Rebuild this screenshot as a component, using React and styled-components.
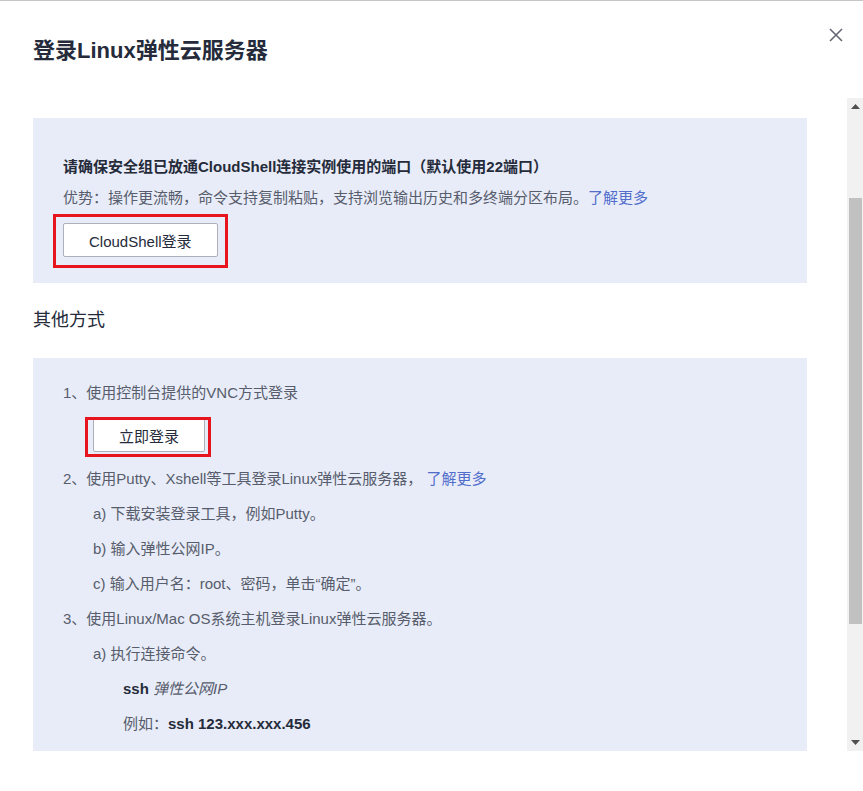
import React, { useLayoutEffect, useRef, useState } from "react";
import styled, { createGlobalStyle } from "styled-components";

const Global = createGlobalStyle`
  html, body { margin: 0; padding: 0; height: 100%; background: #fff; }
  body { font-family: "Liberation Sans", "Noto Sans CJK SC", sans-serif; color: #575d6c; }
  #root { height: 100%; }
  * { box-sizing: border-box; }
`;

const Dialog = styled.div`
  position: relative;
  height: 100vh;
  display: flex;
  flex-direction: column;
  border-top: 1px solid #c6c6c6;
  background: #fff;
`;

const Header = styled.header`
  flex: none;
  height: 97px;
  padding: 37px 0 0 33px;
`;

const Title = styled.h1`
  margin: 0;
  font-size: 22px;
  line-height: 26px;
  font-weight: 700;
  color: #252b3a;
`;

const CloseButton = styled.button`
  position: absolute;
  top: 26px;
  right: 19px;
  width: 16px;
  height: 16px;
  padding: 0;
  border: 0;
  background: none;
  display: flex;
  align-items: center;
  justify-content: center;
  cursor: pointer;
`;

const Body = styled.div`
  flex: 1;
  min-height: 0;
  display: flex;
`;

const Viewport = styled.div`
  flex: 1;
  min-width: 0;
  overflow-y: scroll;
  scrollbar-width: none;
  padding: 147px 40px 20px 33px;
  &::-webkit-scrollbar { display: none; }
`;

const ScrollBar = styled.div`
  flex: none;
  width: 16px;
  display: flex;
  flex-direction: column;
  background: #f1f1f1;
`;

const ScrollButton = styled.div`
  flex: none;
  height: 17px;
  display: flex;
  align-items: center;
  justify-content: center;
`;

const Track = styled.div`
  position: relative;
  flex: 1;
`;

const Thumb = styled.div`
  position: absolute;
  left: 2px;
  right: 1px;
  background: #c1c1c1;
`;

const Panel = styled.section`
  background: #e8ecf8;
  padding: ${(p) => p.$pt}px 30px ${(p) => p.$pb}px;
  display: flex;
  flex-direction: column;
  align-items: flex-start;
`;

const Line = styled.p`
  margin: ${(p) => p.$mt ?? 13}px 0 0 ${(p) => (p.$level || 0) * 30}px;
  font-size: 15px;
  line-height: 22px;
  white-space: nowrap;
  color: ${(p) => (p.$strong ? "#252b3a" : "#575d6c")};
  font-weight: ${(p) => (p.$strong ? 700 : 400)};
  &:first-child { margin-top: 0; }
`;

const Bold = styled.b`
  color: #252b3a;
  font-weight: 700;
`;

const Em = styled.i`
  font-style: italic;
  color: #575d6c;
`;

const Link = styled.a`
  color: #526ecc;
  text-decoration: none;
  cursor: pointer;
`;

const SectionTitle = styled.h2`
  margin: 26px 0 27px;
  font-size: 18px;
  line-height: 22px;
  font-weight: 400;
  color: #252b3a;
`;

const Marked = styled.div`
  position: relative;
  display: flex;
  margin: ${(p) => p.$mt}px 0 0 ${(p) => (p.$level || 0) * 30}px;
  &::after {
    content: "";
    position: absolute;
    top: ${(p) => p.$box[0]}px;
    right: ${(p) => p.$box[1]}px;
    bottom: ${(p) => p.$box[2]}px;
    left: ${(p) => p.$box[3]}px;
    border: 3px solid #e8141d;
    pointer-events: none;
  }
`;

const Button = styled.button`
  height: 34px;
  padding: 0 25px;
  background: #fff;
  border: 1px solid #adb0b8;
  border-radius: 2px;
  font-family: inherit;
  font-size: 15px;
  color: #252b3a;
  cursor: pointer;
`;

const Footer = styled.footer`
  flex: none;
  height: 40px;
`;

const Arrow = ({ up }) => (
  <svg width="9" height="5" viewBox="0 0 9 5">
    <polygon points={up ? "0,5 4.5,0 9,5" : "0,0 4.5,5 9,0"} fill="#505050" />
  </svg>
);

export default function App() {
  const viewRef = useRef(null);
  const trackRef = useRef(null);
  const [thumb, setThumb] = useState({ top: 0, height: 0 });

  useLayoutEffect(() => {
    const v = viewRef.current;
    const t = trackRef.current;
    if (!v || !t) return;
    const update = () => {
      const trackH = t.clientHeight;
      const ratio = v.clientHeight / v.scrollHeight;
      const h = Math.max(20, Math.round(trackH * ratio));
      const maxScroll = v.scrollHeight - v.clientHeight;
      const top = maxScroll > 0 ? Math.round(((trackH - h) * v.scrollTop) / maxScroll) : 0;
      setThumb({ top, height: h });
    };
    v.scrollTop = 127;
    update();
    v.addEventListener("scroll", update);
    return () => v.removeEventListener("scroll", update);
  }, []);

  return (
    <>
      <Global />
      <Dialog>
        <Header>
          <Title>登录Linux弹性云服务器</Title>
        </Header>
        <CloseButton aria-label="关闭">
          <svg width="14" height="14" viewBox="0 0 14 14">
            <path d="M1 1 L13 13 M13 1 L1 13" stroke="#5f6470" strokeWidth="1.5" fill="none" />
          </svg>
        </CloseButton>
        <Body>
          <Viewport ref={viewRef}>
            <Panel $pt={38} $pb={26}>
              <Line $strong>请确保安全组已放通CloudShell连接实例使用的端口（默认使用22端口）</Line>
              <Line $mt={9}>
                优势：操作更流畅，命令支持复制粘贴，支持浏览输出历史和多终端分区布局。<Link>了解更多</Link>
              </Line>
              <Marked $mt={14} $box={[-9, -10, -11, -10]}>
                <Button>CloudShell登录</Button>
              </Marked>
            </Panel>

            <SectionTitle>其他方式</SectionTitle>

            <Panel $pt={24} $pb={165}>
              <Line>1、使用控制台提供的VNC方式登录</Line>
              <Marked $mt={14} $level={1} $box={[-1, -6, -5, -8]}>
                <Button>立即登录</Button>
              </Marked>
              <Line $mt={16}>
                2、使用Putty、Xshell等工具登录Linux弹性云服务器， <Link>了解更多</Link>
              </Line>
              <Line $level={1}>a) 下载安装登录工具，例如Putty。</Line>
              <Line $level={1}>b) 输入弹性公网IP。</Line>
              <Line $level={1}>c) 输入用户名：root、密码，单击“确定”。</Line>
              <Line>3、使用Linux/Mac OS系统主机登录Linux弹性云服务器。</Line>
              <Line $level={1}>a) 执行连接命令。</Line>
              <Line $level={2}>
                <Bold>ssh</Bold> <Em>弹性公网IP</Em>
              </Line>
              <Line $level={2}>
                例如：<Bold>ssh 123.xxx.xxx.456</Bold>
              </Line>
            </Panel>
          </Viewport>
          <ScrollBar>
            <ScrollButton><Arrow up /></ScrollButton>
            <Track ref={trackRef}>
              <Thumb style={{ top: thumb.top, height: thumb.height }} />
            </Track>
            <ScrollButton><Arrow /></ScrollButton>
          </ScrollBar>
        </Body>
        <Footer />
      </Dialog>
    </>
  );
}
